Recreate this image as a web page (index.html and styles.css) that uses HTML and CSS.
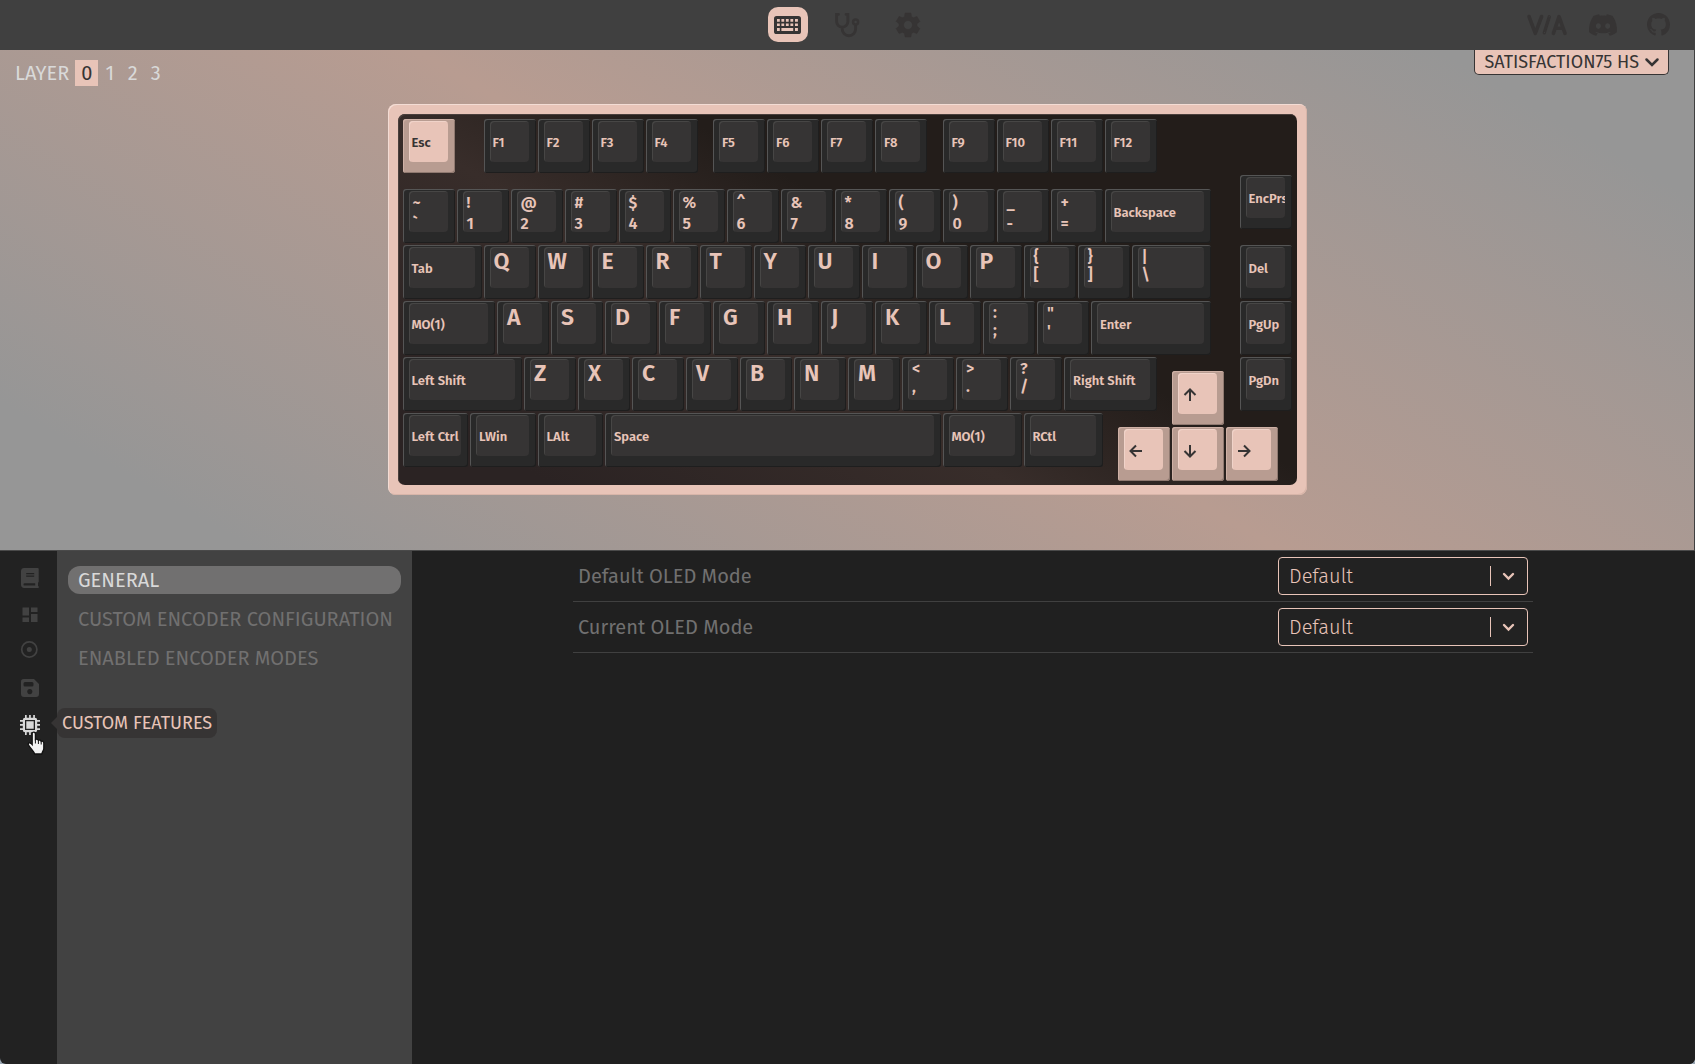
FILE: index.html
```html
<!DOCTYPE html>
<html lang="en">
<head>
<meta charset="utf-8">
<meta name="viewport" content="width=device-width, initial-scale=1">
<title>VIA</title>
<link rel="stylesheet" href="styles.css">
</head>
<body>
<div class="app">
  <header class="topbar">
    <nav class="tabs" aria-label="Main">
      <a class="tab tab-active" href="#configure" aria-label="Configure">
        <svg width="27" height="18" viewBox="0 0 27 18"><rect width="27" height="18" rx="2.6" fill="#363434"/><path fill="#e8c4b8" d="M3 3h2.8v2.7H3zM7.4 3h2.8v2.7H7.4zM11.9 3h2.8v2.7h-2.8zM16.4 3h2.8v2.7h-2.8zM21 3h2.9v2.7H21zM3 7.4h2.8v2.7H3zM7.4 7.4h2.8v2.7H7.4zM11.9 7.4h2.8v2.7h-2.8zM16.4 7.4h2.8v2.7h-2.8zM21 7.4h2.9v2.7H21zM3 12h2.8v2.9H3zM7.4 12h11.8v2.9H7.4zM21 12h2.9v2.9H21z"/></svg>
      </a>
      <a class="tab" href="#test" aria-label="Key Tester">
        <svg width="27" height="27" viewBox="1 0 27 27" fill="none" stroke="currentColor" stroke-width="2.9" stroke-linecap="round"><path d="M5.4 3.4H3.6v7.1a5.6 5.6 0 0 0 11.3 0V3.4h-1.8M9.2 16.5V18a6.7 6.7 0 0 0 13.4 0v-3.6"/><circle cx="22.6" cy="11" r="2.5" stroke-width="2.5"/></svg>
      </a>
      <a class="tab" href="#settings" aria-label="Settings">
        <svg width="30" height="30" viewBox="0 0 24 24" fill="currentColor" stroke="currentColor" stroke-width=".5"><path d="M19.14 12.94c.04-.3.06-.61.06-.94 0-.32-.02-.64-.07-.94l2.03-1.58c.18-.14.23-.41.12-.61l-1.92-3.32c-.12-.22-.37-.29-.59-.22l-2.39.96c-.5-.38-1.03-.7-1.62-.94l-.36-2.54c-.04-.24-.24-.41-.48-.41h-3.84c-.24 0-.43.17-.47.41l-.36 2.54c-.59.24-1.13.57-1.62.94l-2.39-.96c-.22-.08-.47 0-.59.22L2.74 8.87c-.12.21-.08.47.12.61l2.03 1.58c-.05.3-.09.63-.09.94s.02.64.07.94l-2.03 1.58c-.18.14-.23.41-.12.61l1.92 3.32c.12.22.37.29.59.22l2.39-.96c.5.38 1.03.7 1.62.94l.36 2.54c.05.24.24.41.48.41h3.84c.24 0 .44-.17.47-.41l.36-2.54c.59-.24 1.13-.56 1.62-.94l2.39.96c.22.08.47 0 .59-.22l1.92-3.32c.12-.22.07-.47-.12-.61l-2.01-1.58zM12 15.6c-1.98 0-3.6-1.62-3.6-3.6s1.62-3.6 3.6-3.6 3.6 1.62 3.6 3.6-1.62 3.6-3.6 3.6z"/></svg>
      </a>
    </nav>
    <nav class="links" aria-label="External links">
      <a href="#via" aria-label="VIA">
        <svg width="40" height="22" viewBox="0 0 40 22" fill="none" stroke="currentColor" stroke-linecap="round" stroke-linejoin="round"><path stroke-width="3.6" d="M2 2.5l6.3 16.8L14.6 2.5M26.400 19.300l5.600-16.600 6 16.600M28.500 14.200h7"/><path stroke-width="3.400" d="M22.300 2.800L17.300 18.800"/><path stroke="#404040" stroke-width="1" d="M22.300 2.700v.1M17.500 18.500v.1"/></svg>
      </a>
      <a class="discord" href="#discord" aria-label="Discord">
        <svg width="28" height="22" viewBox="0 2.600 24 18.800" fill="currentColor"><path d="M20.317 4.3698a19.7913 19.7913 0 00-4.8851-1.5152.0741.0741 0 00-.0785.0371c-.211.3753-.4447.8648-.6083 1.2495-1.8447-.2762-3.68-.2762-5.4868 0-.1636-.3933-.4058-.8742-.6177-1.2495a.077.077 0 00-.0785-.037 19.7363 19.7363 0 00-4.8852 1.515.0699.0699 0 00-.0321.0277C.5334 9.0458-.319 13.5799.0992 18.0578a.0824.0824 0 00.0312.0561c2.0528 1.5076 4.0413 2.4228 5.9929 3.0294a.0777.0777 0 00.0842-.0276c.4616-.6304.8731-1.2952 1.226-1.9942a.076.076 0 00-.0416-.1057c-.6528-.2476-1.2743-.5495-1.8722-.8923a.077.077 0 01-.0076-.1277c.1258-.0943.2517-.1923.3718-.2914a.0743.0743 0 01.0776-.0105c3.9278 1.7933 8.18 1.7933 12.0614 0a.0739.0739 0 01.0785.0095c.1202.099.246.1981.3728.2924a.077.077 0 01-.0066.1276 12.2986 12.2986 0 01-1.873.8914.0766.0766 0 00-.0407.1067c.3604.698.7719 1.3628 1.225 1.9932a.076.076 0 00.0842.0286c1.961-.6067 3.9495-1.5219 6.0023-3.0294a.077.077 0 00.0313-.0552c.5004-5.177-.8382-9.6739-3.5485-13.6604a.061.061 0 00-.0312-.0286zM8.02 15.3312c-1.1825 0-2.1569-1.0857-2.1569-2.419 0-1.3332.9555-2.4189 2.157-2.4189 1.2108 0 2.1757 1.0952 2.1568 2.419 0 1.3332-.9555 2.4189-2.1569 2.4189zm7.9748 0c-1.1825 0-2.1569-1.0857-2.1569-2.419 0-1.3332.9554-2.4189 2.1569-2.4189 1.2108 0 2.1757 1.0952 2.1568 2.419 0 1.3332-.946 2.4189-2.1568 2.4189Z"/></svg>
      </a>
      <a href="#github" aria-label="GitHub">
        <svg width="23" height="23" viewBox="0 0 16 16" fill="currentColor"><path d="M8 0C3.58 0 0 3.58 0 8c0 3.54 2.29 6.53 5.47 7.59.4.07.55-.17.55-.38 0-.19-.01-.82-.01-1.49-2.01.37-2.53-.49-2.69-.94-.09-.23-.48-.94-.82-1.13-.28-.15-.68-.52-.01-.53.63-.01 1.08.58 1.23.82.72 1.21 1.87.87 2.33.66.07-.52.28-.87.51-1.07-1.78-.2-3.64-.89-3.64-3.95 0-.87.31-1.59.82-2.15-.08-.2-.36-1.02.08-2.12 0 0 .67-.21 2.2.82.64-.18 1.32-.27 2-.27.68 0 1.36.09 2 .27 1.53-1.04 2.2-.82 2.2-.82.44 1.1.16 1.92.08 2.12.51.56.82 1.27.82 2.15 0 3.07-1.87 3.75-3.65 3.95.29.25.54.73.54 1.48 0 1.07-.01 1.93-.01 2.2 0 .21.15.46.55.38A8.013 8.013 0 0016 8c0-4.42-3.58-8-8-8z"/></svg>
      </a>
    </nav>
  </header>

  <section class="stage">
    <div class="layers">
      <span class="layers-label">LAYER</span>
      <button class="layer layer-active">0</button>
      <button class="layer">1</button>
      <button class="layer">2</button>
      <button class="layer">3</button>
    </div>

    <div class="case">
      <div class="plate">
        <button class="key accent r1"><span class="cap">Esc</span></button>
        <button class="key r1 c7"><span class="cap">F1</span></button>
        <button class="key r1"><span class="cap">F2</span></button>
        <button class="key r1"><span class="cap">F3</span></button>
        <button class="key r1"><span class="cap">F4</span></button>
        <button class="key r1 c24"><span class="cap">F5</span></button>
        <button class="key r1"><span class="cap">F6</span></button>
        <button class="key r1"><span class="cap">F7</span></button>
        <button class="key r1"><span class="cap">F8</span></button>
        <button class="key r1 c41"><span class="cap">F9</span></button>
        <button class="key r1"><span class="cap">F10</span></button>
        <button class="key r1"><span class="cap">F11</span></button>
        <button class="key r1"><span class="cap">F12</span></button>
        <button class="key r5 c63"><span class="cap">EncPrs</span></button>

        <button class="key pair tall r6"><span class="cap">~<br>`</span></button>
        <button class="key pair tall r6"><span class="cap">!<br>1</span></button>
        <button class="key pair tall r6"><span class="cap">@<br>2</span></button>
        <button class="key pair tall r6"><span class="cap">#<br>3</span></button>
        <button class="key pair tall r6"><span class="cap">$<br>4</span></button>
        <button class="key pair tall r6"><span class="cap">%<br>5</span></button>
        <button class="key pair tall r6"><span class="cap">^<br>6</span></button>
        <button class="key pair tall r6"><span class="cap">&amp;<br>7</span></button>
        <button class="key pair tall r6"><span class="cap">*<br>8</span></button>
        <button class="key pair tall r6"><span class="cap">(<br>9</span></button>
        <button class="key pair tall r6"><span class="cap">)<br>0</span></button>
        <button class="key pair tall r6"><span class="cap">_<br>-</span></button>
        <button class="key pair tall r6"><span class="cap">+<br>=</span></button>
        <button class="key r6 w8"><span class="cap">Backspace</span></button>

        <button class="key r10 w6"><span class="cap">Tab</span></button>
        <button class="key alpha r10"><span class="cap">Q</span></button>
        <button class="key alpha r10"><span class="cap">W</span></button>
        <button class="key alpha r10"><span class="cap">E</span></button>
        <button class="key alpha r10"><span class="cap">R</span></button>
        <button class="key alpha r10"><span class="cap">T</span></button>
        <button class="key alpha r10"><span class="cap">Y</span></button>
        <button class="key alpha r10"><span class="cap">U</span></button>
        <button class="key alpha r10"><span class="cap">I</span></button>
        <button class="key alpha r10"><span class="cap">O</span></button>
        <button class="key alpha r10"><span class="cap">P</span></button>
        <button class="key pair r10"><span class="cap">{<br>[</span></button>
        <button class="key pair r10"><span class="cap">}<br>]</span></button>
        <button class="key pair r10 w6"><span class="cap">|<br>\</span></button>
        <button class="key r10 c63"><span class="cap">Del</span></button>

        <button class="key r14 w7"><span class="cap">MO(1)</span></button>
        <button class="key alpha r14"><span class="cap">A</span></button>
        <button class="key alpha r14"><span class="cap">S</span></button>
        <button class="key alpha r14"><span class="cap">D</span></button>
        <button class="key alpha r14"><span class="cap">F</span></button>
        <button class="key alpha r14"><span class="cap">G</span></button>
        <button class="key alpha r14"><span class="cap">H</span></button>
        <button class="key alpha r14"><span class="cap">J</span></button>
        <button class="key alpha r14"><span class="cap">K</span></button>
        <button class="key alpha r14"><span class="cap">L</span></button>
        <button class="key pair r14"><span class="cap">:<br>;</span></button>
        <button class="key pair r14"><span class="cap">"<br>'</span></button>
        <button class="key r14 w9"><span class="cap">Enter</span></button>
        <button class="key r14 c63"><span class="cap">PgUp</span></button>

        <button class="key r18 w9"><span class="cap">Left Shift</span></button>
        <button class="key alpha r18"><span class="cap">Z</span></button>
        <button class="key alpha r18"><span class="cap">X</span></button>
        <button class="key alpha r18"><span class="cap">C</span></button>
        <button class="key alpha r18"><span class="cap">V</span></button>
        <button class="key alpha r18"><span class="cap">B</span></button>
        <button class="key alpha r18"><span class="cap">N</span></button>
        <button class="key alpha r18"><span class="cap">M</span></button>
        <button class="key pair r18"><span class="cap">&lt;<br>,</span></button>
        <button class="key pair r18"><span class="cap">&gt;<br>.</span></button>
        <button class="key pair r18"><span class="cap">?<br>/</span></button>
        <button class="key r18 w7"><span class="cap">Right Shift</span></button>
        <button class="key r18 c63"><span class="cap">PgDn</span></button>

        <button class="key r22 w5"><span class="cap">Left Ctrl</span></button>
        <button class="key r22 w5"><span class="cap">LWin</span></button>
        <button class="key r22 w5"><span class="cap">LAlt</span></button>
        <button class="key r22 w25"><span class="cap">Space</span></button>
        <button class="key r22 w6"><span class="cap">MO(1)</span></button>
        <button class="key r22 w6"><span class="cap">RCtl</span></button>

        <button class="key accent r19 c58" aria-label="Up"><span class="cap"><svg class="arrow" viewBox="0 0 16 16"><path d="M8 14V2.500M2.500 8L8 2.500 13.500 8"/></svg></span></button>
        <button class="key accent r23 c54" aria-label="Left"><span class="cap"><svg class="arrow" viewBox="0 0 16 16"><path d="M14 8H2.500M8 2.500L2.500 8 8 13.500"/></svg></span></button>
        <button class="key accent r23 c58" aria-label="Down"><span class="cap"><svg class="arrow" viewBox="0 0 16 16"><path d="M8 2v11.500M2.500 8L8 13.500 13.500 8"/></svg></span></button>
        <button class="key accent r23 c62" aria-label="Right"><span class="cap"><svg class="arrow" viewBox="0 0 16 16"><path d="M2 8h11.500M8 2.500L13.500 8 8 13.500"/></svg></span></button>
      </div>
    </div>

    <button class="device">SATISFACTION75 HS
      <svg width="14" height="9" viewBox="0 0 14 9" fill="none" stroke="currentColor" stroke-width="2.500" stroke-linecap="round"><path d="M1.500 1.500L7 7l5.500-5.500"/></svg>
    </button>
  </section>

  <main class="panel">
    <nav class="rail" aria-label="Panes">
      <a href="#keymap" aria-label="Keymap"><svg width="20" height="20" viewBox="-.7 0 20 20" fill="currentColor"><path fill-rule="evenodd" d="M3.500 0H17a1 1 0 0 1 1 1v12.500a1 1 0 0 1-.7 1v3.200a1.100 1.100 0 0 1 .7 1.100V20H3.500A3.300 3.300 0 0 1 .3 16.800V3.300A3.300 3.300 0 0 1 3.500 0zM5.500 5v1.200h8V5zM5.500 7.500v1.200h8V7.500zM4 15.200a1.200 1.200 0 0 0 0 2.400h10.500v-2.400z"/></svg></a>
      <a href="#layouts" aria-label="Layouts"><svg width="20" height="20" viewBox="0 0 20 20" fill="currentColor"><path d="M2.500 2.500H9v8H2.500zM11 2.500h6.500v4.500H11zM2.500 12.500H9V17H2.500zM11 9h6.500v8H11z"/></svg></a>
      <a href="#macros" aria-label="Macros"><svg width="20" height="18" viewBox="0 0 20 18"><circle cx="9.300" cy="7.500" r="7.600" fill="none" stroke="currentColor" stroke-width="1.700"/><circle cx="9.300" cy="7.500" r="2.500" fill="currentColor"/></svg></a>
      <a href="#save" aria-label="Save + Load"><svg width="20" height="21" viewBox="-.5 -1 20 21" fill="currentColor"><path fill-rule="evenodd" d="M3 1h10.500L18.500 6v10a3 3 0 0 1-3 3H3.500a3 3 0 0 1-3-3V3.500A2.500 2.500 0 0 1 3 1zM4.500 4a1.500 1.500 0 0 0-1.500 1.500v1.500a1.500 1.500 0 0 0 1.500 1.500h7a1.500 1.500 0 0 0 1.500-1.500V5.500A1.500 1.500 0 0 0 11.500 4zM9.300 11a2.600 2.600 0 1 0 .01 0z"/></svg></a>
      <a class="rail-active" href="#features" aria-label="Custom Features"><svg width="20" height="20" viewBox="0 0 20 20" fill="currentColor"><path fill-rule="evenodd" d="M5 2.800V0h1.700v2.800h2.400V0h1.700v2.800h2.400V0h1.700v2.800A2.300 2.300 0 0 1 17.200 5H20v1.700h-2.800v2.400H20v1.700h-2.800v2.400H20v1.700h-2.800a2.300 2.300 0 0 1-2.300 2.300V20h-1.700v-2.800h-2.400V20H9.100v-2.800H6.700V20H5v-2.800a2.300 2.300 0 0 1-2.200-2.300H0v-1.700h2.800v-2.400H0V9.100h2.800V6.700H0V5h2.800A2.300 2.300 0 0 1 5 2.800zM5 5v10h10V5zM6.300 6.300h7.400v7.400H6.300z"/></svg>
        <span class="tooltip">CUSTOM FEATURES</span>
        <svg class="pointer" width="18" height="25" viewBox="0 0 18 25"><path d="M5.500 1.500C7.200.6 8.400 1.600 8.400 3v5.500c1.200-.6 2.600-.3 3 .8 1.200-.6 2.500-.1 2.700 1 1.500-.6 2.700.2 2.700 1.800v5.400c0 2-1.600 3-2 5.500H7.700c-1-3-4.200-5.500-6.200-9-1-1.800 1-3 2.500-1.600l1.200 1.200V3c0-.6 0-1 .3-1.500z" fill="#f2f2f2" stroke="#111" stroke-width="1.300"/><path d="M8.400 8.500v4M11.400 9.500v3.500M14.200 10.500v3" stroke="#111" fill="none"/></svg>
      </a>
    </nav>

    <nav class="submenu" aria-label="Custom features">
      <a class="submenu-active" href="#general">GENERAL</a>
      <a href="#encoder">CUSTOM ENCODER CONFIGURATION</a>
      <a href="#modes">ENABLED ENCODER MODES</a>
    </nav>

    <div class="content">
      <div class="setting">
        <label for="default-mode">Default OLED Mode</label>
        <span class="dropdown">
          <select id="default-mode"><option>Default</option></select>
          <svg class="dropdown-mark" width="26" height="20" viewBox="0 0 26 20"><path d="M.5 0v20" stroke="currentColor"/><path d="M14 8l4.500 4.500L23 8" fill="none" stroke="currentColor" stroke-width="2.400" stroke-linecap="round"/></svg>
        </span>
      </div>
      <div class="setting">
        <label for="current-mode">Current OLED Mode</label>
        <span class="dropdown">
          <select id="current-mode"><option>Default</option></select>
          <svg class="dropdown-mark" width="26" height="20" viewBox="0 0 26 20"><path d="M.5 0v20" stroke="currentColor"/><path d="M14 8l4.500 4.500L23 8" fill="none" stroke="currentColor" stroke-width="2.400" stroke-linecap="round"/></svg>
        </span>
      </div>
    </div>
  </main>
</div>
</body>
</html>
```
FILE: styles.css
```css
:root {
  --accent: #e8c4b8;
  --accent-dark: #b89c91;
  --bar: #404040;
  --dark: #222;
  --icon: #363434;
  --muted: #717070;
  --light: #d9d9d9;
}

* { box-sizing: border-box; }

body {
  margin: 0;
  background: #9aa7b3;
  font-family: "Fira Sans", "Noto Sans", sans-serif;
  font-size: 20px;
  line-height: 24px;
}

a { color: inherit; text-decoration: none; }

button {
  margin: 0;
  padding: 0;
  border: 0;
  background: none;
  color: inherit;
  font: inherit;
  text-align: left;
}

svg {
  display: block;
  overflow: visible;
}

.app {
  display: flex;
  flex-direction: column;
  min-height: 100vh;
  border-radius: 0 0 6px 6px;
  overflow: hidden;
  background: var(--dark);
}

/* top bar */
.topbar {
  display: grid;
  grid-template-columns: 1fr auto 1fr;
  align-items: center;
  height: 50px;
  padding-bottom: 1px;
  background: var(--bar);
  color: var(--icon);
}

.tabs {
  grid-column: 2;
  display: flex;
  gap: 20px;
}

.tab {
  display: flex;
  align-items: center;
  justify-content: center;
  width: 40px;
  height: 35px;
  border-radius: 10px;
}

.tab-active { background: var(--accent); }

.links {
  display: flex;
  align-items: center;
  justify-content: flex-end;
  gap: 22px;
  padding-right: 25px;
}

.discord { margin-right: 8px; }

/* keyboard stage */
.stage {
  display: grid;
  grid-template-columns: 1fr auto 1fr;
  align-items: start;
  border-right: 1px solid var(--bar);
  border-bottom: 1px solid #4a4a4a;
  background: linear-gradient(30deg, #969696 10%, var(--accent-dark) 50%, #969696 90%);
}

.layers {
  display: flex;
  align-items: center;
  padding: 10px 15px;
  color: var(--light);
}

.layers-label { margin-right: 6px; }

.layer {
  width: 23px;
  height: 26px;
  text-align: center;
}

.layer-active {
  background: var(--accent);
  color: var(--icon);
}

.device {
  display: flex;
  align-items: center;
  justify-self: end;
  gap: 6px;
  height: 25px;
  margin-right: 25px;
  padding: 0 9px 0 10px;
  border: 1px solid var(--icon);
  border-top: 0;
  border-radius: 0 0 5px 5px;
  background: var(--accent);
  color: var(--icon);
  font-size: 18px;
}

.case {
  margin: 54px 0 55px;
  padding: 10px;
  border-radius: 8px;
  background: var(--accent);
  box-shadow: inset 1px 1px #f3dcd4, inset -1px -1px #d8b5a9;
}

/* one key unit is four columns wide and four rows tall */
.plate {
  display: grid;
  grid-template-columns: repeat(66, 1fr);
  grid-template-rows: repeat(26, 14px);
  width: 899px;
  padding: 5px 3px 2px 5px;
  border-radius: 7px;
  background: linear-gradient(30deg, #2b2323 10%, #382d2a 40%, #231d1a 60%);
  box-shadow: inset 1px 1px #4a3f3c;
}

.key {
  display: flex;
  grid-column: span 4;
  margin: 0 2px 2px 0;
  padding: 2px 7px 11px 6px;
  border-radius: 3px;
  background: #292929;
  box-shadow: inset 1px 1px #555, inset -1px -1px #1e1e1e;
  color: var(--accent);
  font-size: 13px;
  font-weight: 600;
}

.cap {
  display: flex;
  align-items: center;
  flex: 1;
  min-width: 0;
  padding: 2px 0 0 3px;
  border-radius: 4px;
  overflow: hidden;
  background: #363434;
  box-shadow: inset 1px 1px #474645;
  line-height: 18px;
  white-space: nowrap;
}

.accent {
  background: var(--accent-dark);
  box-shadow: inset 1px 1px #cfb1a6, inset -1px -1px #8f7970;
  color: var(--icon);
}

.accent .cap {
  background: var(--accent);
  box-shadow: inset 1px 1px #f0d3c9;
}

.alpha { font-size: 23px; }
.alpha .cap { align-items: flex-start; padding: 5px 0 0 4px; }
.pair { font-size: 16px; }
.pair .cap { align-items: flex-start; padding: 1px 0 0 4px; overflow: visible; }
.pair.tall .cap { line-height: 21px; }

.arrow {
  width: 16px;
  height: 16px;
  margin-left: 1px;
  fill: none;
  stroke: currentColor;
  stroke-width: 2;
}

.r1 { grid-row: 1 / span 4; }
.r5 { grid-row: 5 / span 4; }
.r6 { grid-row: 6 / span 4; }
.r10 { grid-row: 10 / span 4; }
.r14 { grid-row: 14 / span 4; }
.r18 { grid-row: 18 / span 4; }
.r19 { grid-row: 19 / span 4; }
.r22 { grid-row: 22 / span 4; }
.r23 { grid-row: 23 / span 4; }

.c7 { grid-column: 7 / span 4; }
.c24 { grid-column: 24 / span 4; }
.c41 { grid-column: 41 / span 4; }
.c54 { grid-column: 54 / span 4; }
.c58 { grid-column: 58 / span 4; }
.c62 { grid-column: 62 / span 4; }
.c63 { grid-column: 63 / span 4; }

.w5 { grid-column: span 5; }
.w6 { grid-column: span 6; }
.w7 { grid-column: span 7; }
.w8 { grid-column: span 8; }
.w9 { grid-column: span 9; }
.w25 { grid-column: span 25; }

/* lower panel */
.panel {
  display: grid;
  grid-template-columns: 57px 355px 1fr;
  flex: 1;
}

.rail {
  display: flex;
  flex-direction: column;
  gap: 17px;
  padding: 17px 0 0 20px;
  color: #424242;
}

.rail-active {
  position: relative;
  color: var(--light);
}

.tooltip {
  position: absolute;
  top: -7px;
  left: 37px;
  z-index: 1;
  padding: 3px 5px;
  border-radius: 8px;
  background: var(--icon);
  color: var(--accent);
  font-size: 18px;
  white-space: nowrap;
}

.tooltip::before {
  content: "";
  position: absolute;
  top: 9px;
  left: -6px;
  border: 6px solid transparent;
  border-left: 0;
  border-right-color: var(--icon);
}

.pointer {
  position: absolute;
  top: 16px;
  left: 7px;
}

.submenu {
  display: flex;
  flex-direction: column;
  gap: 11px;
  padding: 15px 11px;
  background: #424242;
  color: var(--muted);
}

.submenu a {
  padding: 2px 10px;
  border-radius: 12px;
  white-space: nowrap;
}

.submenu .submenu-active {
  background: var(--muted);
  color: var(--light);
}

.content {
  padding: 0 162px 0 161px;
  background: #202020;
}

.setting {
  display: flex;
  align-items: center;
  justify-content: space-between;
  height: 51px;
  padding: 0 5px;
  border-bottom: 1px solid #404040;
  color: var(--muted);
}

.dropdown {
  position: relative;
  width: 250px;
  color: var(--accent);
}

.dropdown select {
  display: block;
  width: 100%;
  height: 38px;
  padding: 0 10px;
  appearance: none;
  border: 1px solid var(--accent);
  border-radius: 4px;
  background: var(--dark);
  color: inherit;
  font: inherit;
  font-weight: 300;
}

.dropdown-mark {
  position: absolute;
  top: 9px;
  right: 12px;
  pointer-events: none;
}
```
